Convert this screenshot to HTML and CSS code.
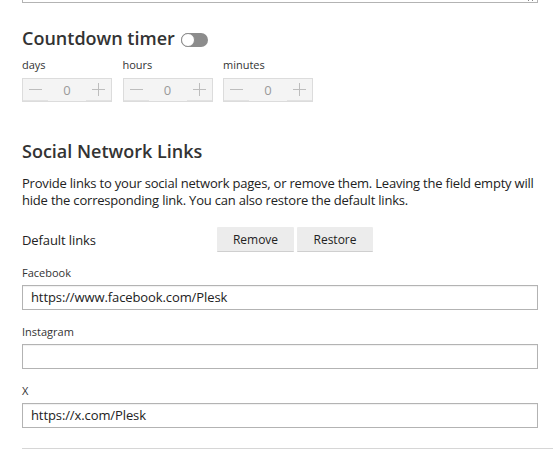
FILE: index.html
```html
<!DOCTYPE html>
<html>
<head>
<meta charset="utf-8">
<link rel="stylesheet" href="styles.css">
</head>
<body>
<div class="page">
  <div class="textarea-end"><span class="grip"></span></div>

  <h2 class="section-title">Countdown timer <span class="toggle"><span class="knob"></span></span></h2>
  <div class="timer">
    <div class="timer-field">
      <div class="small-label">days</div>
      <div class="spinner"><span class="spin-btn minus"></span><span class="spin-val">0</span><span class="spin-btn plus"></span></div>
    </div>
    <div class="timer-field">
      <div class="small-label">hours</div>
      <div class="spinner"><span class="spin-btn minus"></span><span class="spin-val">0</span><span class="spin-btn plus"></span></div>
    </div>
    <div class="timer-field">
      <div class="small-label">minutes</div>
      <div class="spinner"><span class="spin-btn minus"></span><span class="spin-val">0</span><span class="spin-btn plus"></span></div>
    </div>
  </div>

  <h2 class="section-title social-title">Social Network Links</h2>
  <p class="desc">Provide links to your social network pages, or remove them. Leaving the field empty will hide the corresponding link. You can also restore the default links.</p>

  <div class="default-row">
    <span class="row-label">Default links</span>
    <div class="btns">
      <button class="btn btn-remove">Remove</button>
      <button class="btn btn-restore">Restore</button>
    </div>
  </div>

  <div class="field first-field">
    <div class="small-label">Facebook</div>
    <div class="input">https://www.facebook.com/Plesk</div>
  </div>
  <div class="field">
    <div class="small-label">Instagram</div>
    <div class="input"></div>
  </div>
  <div class="field">
    <div class="small-label">X</div>
    <div class="input">https://x.com/Plesk</div>
  </div>
  <div class="bottom-rule"></div>
</div>
</body>
</html>
```
FILE: styles.css
```css
html, body {
  margin: 0;
  padding: 0;
  background: #fff;
}
body {
  font-family: "Open Sans", "Noto Sans", sans-serif;
  color: #222;
}
.page {
  padding: 0 19px 0 22px;
}
.textarea-end {
  position: relative;
  height: 2px;
  border: 1px solid #b3b3b3;
  border-top: none;
}
.grip {
  position: absolute;
  right: 4px;
  top: -3px;
  width: 3px;
  height: 4px;
  border-left: 1px solid #888;
  border-right: 1px solid #888;
}
.section-title {
  margin: 23px 0 0;
  font-size: 18px;
  font-weight: 600;
  line-height: 24px;
  color: #333;
  display: flex;
  align-items: center;
  gap: 6px;
}
.toggle {
  position: relative;
  display: inline-block;
  width: 27px;
  height: 14px;
  border-radius: 7px;
  background: #8c8c8c;
  margin-top: 4px;
}
.knob {
  position: absolute;
  left: 0;
  top: 0;
  width: 12px;
  height: 12px;
  border-radius: 50%;
  background: #fff;
  border: 1px solid #8c8c8c;
}
.timer {
  display: flex;
  gap: 10.5px;
  margin-top: 7px;
}
.small-label {
  font-size: 11px;
  line-height: 15px;
  color: #333;
}
.spinner {
  margin-top: 6px;
  display: flex;
  width: 88px;
  height: 22px;
  border: 1px solid #dcdcdc;
  background: #f4f4f4;
}
.spin-btn {
  position: relative;
  width: 25px;
  height: 21px;
  border-bottom: 1px solid #e2e2e2;
}
.spin-btn.minus::before,
.spin-btn.plus::before {
  content: "";
  position: absolute;
  left: 6px;
  top: 10px;
  width: 13px;
  height: 1px;
  background: #bdbdbd;
}
.spin-btn.plus::after {
  content: "";
  position: absolute;
  left: 12px;
  top: 4px;
  width: 1px;
  height: 13px;
  background: #bdbdbd;
}
.spin-val {
  flex: 1;
  text-align: center;
  font-size: 13px;
  line-height: 22px;
  color: #9a9a9a;
}
.social-title {
  margin-top: 37px;
}
.desc {
  margin: 12px 0 0;
  font-size: 13px;
  line-height: 17px;
  letter-spacing: -0.2px;
  color: #222;
}
.default-row {
  display: flex;
  align-items: center;
  margin-top: 18px;
}
.row-label {
  width: 195px;
  font-size: 13px;
  letter-spacing: -0.1px;
  color: #222;
}
.btns {
  display: flex;
  gap: 3px;
}
.btn {
  font-family: "Open Sans", "Noto Sans", sans-serif;
  font-size: 12px;
  color: #222;
  height: 25px;
  padding: 0;
  border: none;
  border-bottom: 1px solid #cfcfcf;
  background: #ececec;
  border-radius: 1px;
}
.btn-remove { width: 77px; }
.btn-restore { width: 76px; }
.field {
  margin-top: 14px;
}
.first-field {
  margin-top: 13px;
}
.input {
  margin-top: 5px;
  height: 23px;
  border: 1px solid #b3b3b3;
  box-shadow: inset 0 1px 1px rgba(0,0,0,0.06);
  padding: 0 8px;
  font-size: 13px;
  line-height: 23px;
  letter-spacing: -0.1px;
  color: #222;
}
.bottom-rule {
  margin-top: 20px;
  height: 1px;
  background: #d6d6d6;
  margin-right: -15px;
}
```
